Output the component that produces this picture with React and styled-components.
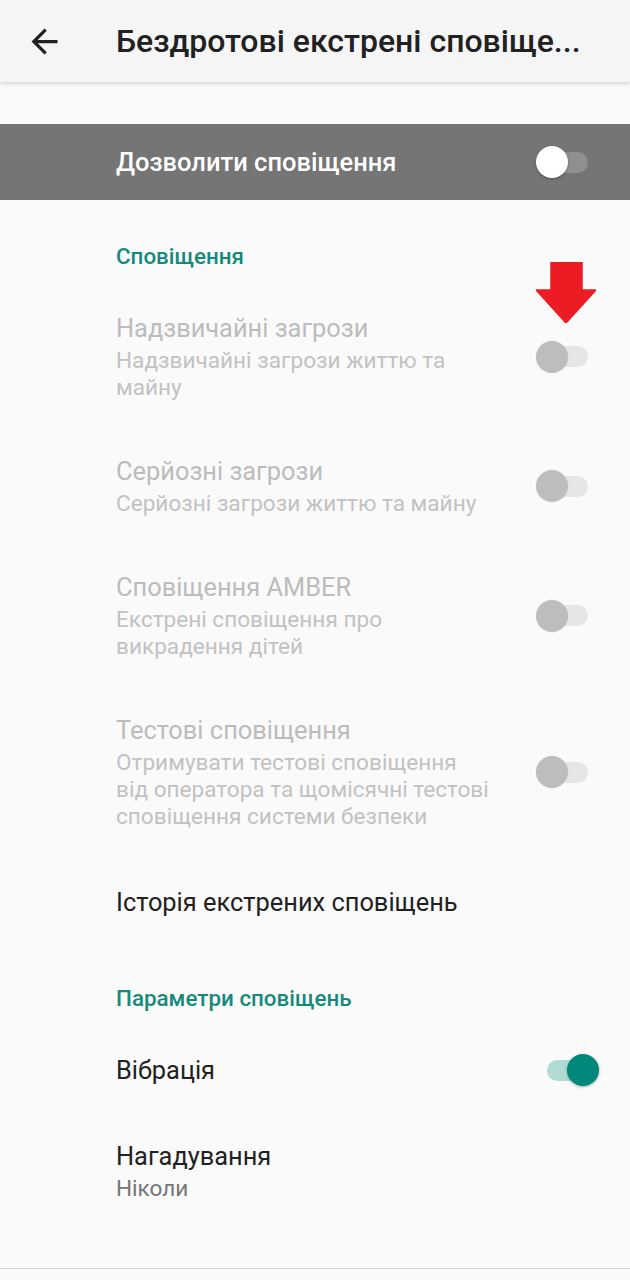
import React from "react";
import styled, { createGlobalStyle } from "styled-components";

const Global = createGlobalStyle`
  html, body { margin: 0; padding: 0; background: #fafafa; }
  body { font-family: Roboto, "Noto Sans", Arial, sans-serif; -webkit-font-smoothing: antialiased; }
  * { box-sizing: border-box; }
`;

const Page = styled.div`
  width: 630px;
  height: 1280px;
  display: flex;
  flex-direction: column;
  background: #fafafa;
  overflow: hidden;
`;

const TopBar = styled.header`
  height: 82px;
  flex: none;
  display: flex;
  align-items: center;
  padding-left: 25px;
  gap: 52px;
  background: #f5f5f5;
  box-shadow: 0 2px 4px rgba(0, 0, 0, 0.14);
  position: relative;
  z-index: 1;
`;

const BackButton = styled.button`
  width: 39px;
  height: 39px;
  padding: 0;
  border: 0;
  background: none;
  display: flex;
  color: #212121;
`;

const Title = styled.h1`
  margin: 0;
  font-size: 32px;
  font-weight: 500;
  color: #212121;
  white-space: nowrap;
`;

const Content = styled.main`
  flex: 1;
  padding-top: 42px;
  display: flex;
  flex-direction: column;
`;

const MasterBar = styled.div`
  height: 76px;
  display: flex;
  align-items: center;
  justify-content: space-between;
  padding: 0 42px 0 116px;
  background: #757575;
`;

const MasterLabel = styled.span`
  font-size: 25.5px;
  font-weight: 500;
  color: #ffffff;
`;

const SectionHeader = styled.div`
  padding: 42px 0 15px 116px;
  font-size: 22.4px;
  line-height: 28px;
  font-weight: 500;
  color: #168a7a;
`;

const Item = styled.div`
  display: flex;
  align-items: center;
  padding: ${(p) => p.$pad || "27px 0 27px 116px"};
  position: relative;
`;

const Texts = styled.div`
  flex: 1;
  max-width: 378px;
  display: flex;
  flex-direction: column;
`;

const ItemTitle = styled.div`
  font-size: 25.4px;
  line-height: 32px;
  color: ${(p) => (p.$disabled ? "#bcbcbc" : "#212121")};
`;

const ItemSub = styled.div`
  margin-top: 3px;
  font-size: 22.6px;
  line-height: 27px;
  color: ${(p) => (p.$disabled ? "#c2c2c2" : "#767676")};
`;

const SwitchWrap = styled.div`
  position: absolute;
  right: ${(p) => p.$right}px;
  top: 50%;
  transform: translateY(-50%);
  width: 52px;
  height: 32px;
  display: flex;
  align-items: center;
`;

const Track = styled.div`
  width: 52px;
  height: 21px;
  border-radius: 11px;
  background: ${(p) => p.$color};
`;

const Thumb = styled.div`
  position: absolute;
  top: 0;
  ${(p) => (p.$on ? "right: 0;" : "left: 0;")}
  width: 32px;
  height: 32px;
  border-radius: 50%;
  background: ${(p) => p.$color};
  box-shadow: ${(p) => (p.$shadow ? "0 1px 3px rgba(0,0,0,0.3)" : "0 0 2px rgba(0,0,0,0.08)")};
`;

const InlineSwitch = styled.div`
  position: relative;
  width: 52px;
  height: 32px;
  display: flex;
  align-items: center;
`;

const Footer = styled.div`
  height: 12px;
  flex: none;
  border-top: 1px solid #d2d2d2;
  background: #fafafa;
`;

const Arrow = styled.svg`
  position: absolute;
  left: 536px;
  top: -23px;
  width: 60px;
  height: 61px;
`;

function Switch({ on, variant, right }) {
  const styles = {
    disabled: { track: "#e6e6e6", thumb: "#bdbdbd", shadow: false },
    on: { track: "#b3dbd6", thumb: "#00897b", shadow: true },
  }[variant];
  return (
    <SwitchWrap $right={right}>
      <Track $color={styles.track} />
      <Thumb $on={on} $color={styles.thumb} $shadow={styles.shadow} />
    </SwitchWrap>
  );
}

function Pref({ title, sub, disabled, sw, pad, children }) {
  return (
    <Item $pad={pad}>
      {children}
      <Texts>
        <ItemTitle $disabled={disabled}>{title}</ItemTitle>
        {sub && <ItemSub $disabled={disabled}>{sub}</ItemSub>}
      </Texts>
      {sw}
    </Item>
  );
}

export default function App() {
  return (
    <>
      <Global />
      <Page>
        <TopBar>
          <BackButton aria-label="Назад">
            <svg width="39" height="39" viewBox="0 0 24 24">
              <path
                fill="currentColor"
                d="M20 11H7.83l5.59-5.59L12 4l-8 8 8 8 1.41-1.41L7.83 13H20v-2z"
              />
            </svg>
          </BackButton>
          <Title>Бездротові екстрені сповіще...</Title>
        </TopBar>
        <Content>
          <MasterBar>
            <MasterLabel>Дозволити сповіщення</MasterLabel>
            <InlineSwitch>
              <Track $color="#8f8f8f" />
              <Thumb $color="#ffffff" $shadow />
            </InlineSwitch>
          </MasterBar>

          <SectionHeader>Сповіщення</SectionHeader>

          <Pref
            disabled
            title="Надзвичайні загрози"
            sub="Надзвичайні загрози життю та майну"
            sw={<Switch variant="disabled" right={42} />}
          >
            <Arrow viewBox="0 0 60 61">
              <path
                d="M15 0H46V28H60L30 61L0 28H15Z"
                fill="#ed1c24"
                stroke="#ed1c24"
                strokeWidth="1.5"
                strokeLinejoin="round"
              />
            </Arrow>
          </Pref>
          <Pref
            disabled
            title="Серйозні загрози"
            sub="Серйозні загрози життю та майну"
            sw={<Switch variant="disabled" right={42} />}
          />
          <Pref
            disabled
            title="Сповіщення AMBER"
            sub="Екстрені сповіщення про викрадення дітей"
            sw={<Switch variant="disabled" right={42} />}
          />
          <Pref
            disabled
            title="Тестові сповіщення"
            sub="Отримувати тестові сповіщення від оператора та щомісячні тестові сповіщення системи безпеки"
            sw={<Switch variant="disabled" right={42} />}
          />
          <Pref title="Історія екстрених сповіщень" pad="29px 0 24px 116px" />

          <SectionHeader>Параметри сповіщень</SectionHeader>

          <Pref title="Вібрація" sw={<Switch on variant="on" right={31} />} />
          <Pref title="Нагадування" sub="Ніколи" />
        </Content>
        <Footer />
      </Page>
    </>
  );
}
